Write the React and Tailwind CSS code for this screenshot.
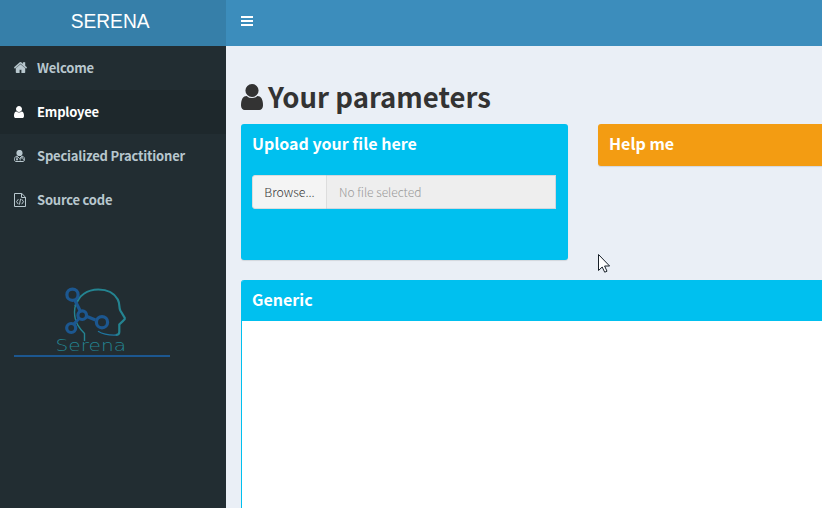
import React from "react";

const HOME =
  "M1472 992v480q0 26-19 45t-45 19h-384v-384h-256v384h-384q-26 0-45-19t-19-45v-480q0-1 .5-3t.5-3l575-474 575 474q1 2 1 6zm223-69l-62 74q-8 9-21 11h-3q-13 0-21-7l-692-577-692 577q-12 8-24 7-13-2-21-11l-62-74q-8-10-7-23.5t11-21.5l719-599q32-26 76-26t76 26l244 204v-195q0-14 9-23t23-9h192q14 0 23 9t9 23v408l219 182q10 8 11 21.5t-7 23.5z";
const USER =
  "M1536 1399q0 109-62.5 187t-150.5 78h-854q-88 0-150.5-78t-62.5-187q0-85 8.5-160.5t31.5-152 58.5-131 94-89 134.5-34.5q131 128 313 128t313-128q76 0 134.5 34.5t94 89 58.5 131 31.5 152 8.5 160.5zm-256-887q0 159-112.5 271.5t-271.5 112.5-271.5-112.5-112.5-271.5 112.5-271.5 271.5-112.5 271.5 112.5 112.5 271.5z";

function HomeIcon() {
  return (
    <svg className="-mt-px h-[11px] w-[13px]" viewBox="80 240 1632 1310" preserveAspectRatio="none" fill="currentColor" stroke="currentColor" strokeWidth="30">
      <path d={HOME} />
    </svg>
  );
}

function UserIcon({ className }) {
  return (
    <svg className={className} viewBox="256 128 1280 1536" fill="currentColor" preserveAspectRatio="none">
      <path d={USER} />
    </svg>
  );
}

function DoctorIcon() {
  return (
    <svg className="h-3 w-[11px]" viewBox="0 0 11 12" fill="none" stroke="currentColor">
      <circle cx="5.5" cy="3" r="3.1" fill="currentColor" stroke="none" />
      <path d="M2.8 6.2C1.2 6.4.5 7.6.5 9.8c0 1.1.6 1.7 1.5 1.7h7c.9 0 1.5-.6 1.5-1.7 0-2.2-.7-3.4-2.3-3.6" />
      <path d="M3 6v3M8 6v2M3.2 6.300l2.300 2.200 2.300-2.200M6.200 10.500V9.300c0-.9.700-1.300 1.600-1.300s1.600.4 1.600 1.300v1" />
      <circle cx="3" cy="9.600" r="1" fill="currentColor" stroke="none" />
    </svg>
  );
}

function CodeFileIcon() {
  return (
    <svg className="h-[14px] w-3" viewBox="0 0 12 14" fill="none" stroke="currentColor">
      <path d="M.5.5h7.300l3.700 3.700v9.300H.5z" />
      <path d="M7.500.5v4h4" />
      <path d="M4.300 6.200L2.500 8.700l1.800 2.500M7.700 6.200l1.800 2.500-1.800 2.500M6.600 5.800l-1.200 5.800" />
    </svg>
  );
}

function SerenaLogo() {
  return (
    <svg className="block h-[74px] w-[156px]" viewBox="14 284 156 74" fill="none">
      <path
        d="M84.500 341v-7.500C80 329 74.500 323 74.500 312c0-3 .4-5 1.200-7.200"
        stroke="#248491"
        strokeWidth="1.400"
      />
      <path
        d="M75.300 306c3.500-10.500 12-16.500 23-16.500 10 0 16.500 4.500 19.500 10 2.500 5 .8 7.500 2.500 11l4.500 7.500c.4 1.200-.3 1.800-1.500 2.700l-4 3.800v7.500c0 2-1.500 3-3.500 3"
        stroke="#248491"
        strokeWidth="2.200"
      />
      <path d="M116.500 335c-6 .3-13-.5-18.500-3.800" stroke="#2076a0" strokeWidth="1.300" />
      <g stroke="#1c5790" strokeWidth="3.200">
        <path d="M75 300.500l5 10M78.500 319l-4.500 5M87 316.500l8.500 3.500" />
        <circle cx="72.500" cy="294.700" r="5.600" />
        <circle cx="82.200" cy="315.200" r="4.300" />
        <circle cx="71.200" cy="328" r="4.500" />
        <circle cx="102" cy="322.200" r="5.600" />
      </g>
      <text
        x="55.500"
        y="350.700"
        fill="#248491"
        fontSize="16"
        fontFamily="'DejaVu Sans Light', 'DejaVu Sans', sans-serif"
        fontWeight="200"
        textLength="70.500"
        lengthAdjust="spacingAndGlyphs"
      >
        Serena
      </text>
      <path d="M14 356h156" stroke="#1c5790" strokeWidth="2" />
    </svg>
  );
}

function NavItem({ icon, label, active }) {
  return (
    <li
      className={
        active
          ? "flex h-11 items-center bg-[#1e282c] pl-[14px] text-white"
          : "flex h-11 items-center pl-[14px] text-[#b8c7ce]"
      }
    >
      <span className="flex w-[23px] items-center">{icon}</span>
      <span className="text-[13px] leading-5 font-bold tracking-[-0.2px] whitespace-nowrap">{label}</span>
    </li>
  );
}

function BoxTitle({ children }) {
  return <h3 className="text-[16px] leading-5 font-bold text-white whitespace-nowrap">{children}</h3>;
}

export default function App() {
  return (
    <div className="flex h-[508px] w-[822px] overflow-hidden bg-[#eaeff6] font-['Noto_Sans_CJK_SC',sans-serif]">
      <aside className="flex w-[226px] shrink-0 flex-col bg-[#222d32]">
        <div className="flex h-[46px] items-center justify-center bg-[#367fa9] pr-[5px] pb-1 font-['Liberation_Sans',Arial,sans-serif] text-xl text-white">
          <span className="inline-block scale-x-[.96] scale-y-105">SERENA</span>
        </div>
        <ul>
          <NavItem icon={<HomeIcon />} label="Welcome" />
          <NavItem icon={<UserIcon className="h-3 w-[10px]" />} label="Employee" active />
          <NavItem icon={<DoctorIcon />} label="Specialized Practitioner" />
          <NavItem icon={<CodeFileIcon />} label="Source code" />
        </ul>
        <div className="mt-[62px] ml-[14px]">
          <SerenaLogo />
        </div>
      </aside>

      <div className="flex min-w-0 flex-1 flex-col">
        <header className="flex h-[46px] shrink-0 items-start bg-[#3c8dbc] pt-4 pl-[15px]">
          <div className="flex w-3 flex-col gap-[2px]">
            <span className="h-[2px] bg-white" />
            <span className="h-[2px] bg-white" />
            <span className="h-[2px] bg-white" />
          </div>
        </header>

        <main className="flex flex-1 flex-col pl-[15px]">
          <h1 className="flex h-[78px] items-start pt-[38px] text-[#333]">
            <UserIcon className="h-[26px] w-[22px]" />
            <span className="-mt-[6px] ml-[5px] text-[27.500px] leading-9 font-bold whitespace-nowrap">
              Your parameters
            </span>
          </h1>

          <div className="flex items-start gap-[30px]">
            <section className="h-[136px] w-[327px] shrink-0 rounded-[3px] bg-[#00c0ef] px-[11px] pt-[9px] shadow-[0_1px_1px_rgba(0,0,0,0.1)]">
              <BoxTitle>Upload your file here</BoxTitle>
              <div className="mt-[22px] flex h-[34px] w-[304px]">
                <button className="w-[75px] shrink-0 rounded-l-[3px] border border-[#ddd] bg-[#f4f4f4] text-[12.300px] font-light text-[#333]">
                  Browse...
                </button>
                <div className="flex flex-1 items-center border border-l-0 border-[#d2d6de] bg-[#eee] pl-3 text-[12px] font-light text-[#999]">
                  No file selected
                </div>
              </div>
            </section>
            <section className="h-[42px] flex-1 rounded-l-[3px] bg-[#f39c12] px-[11px] pt-[9px] shadow-[0_1px_1px_rgba(0,0,0,0.1)]">
              <BoxTitle>Help me</BoxTitle>
            </section>
          </div>

          <section className="mt-5 flex flex-1 flex-col rounded-tl-[3px] border-l border-[#00c0ef] bg-white">
            <div className="h-[41px] rounded-tl-[2px] bg-[#00c0ef] px-[10px] pt-[9px]">
              <BoxTitle>Generic</BoxTitle>
            </div>
          </section>
        </main>
      </div>

      <svg
        className="absolute top-[253px] left-[598px] h-5 w-[13px]"
        viewBox="0 0 13 20"
        fill="white"
        stroke="#182029"
      >
        <path d="M.5 1.500v16l3.700-3.500 2.500 5.200 2.300-1-2.400-5.200h5z" />
      </svg>
    </div>
  );
}
